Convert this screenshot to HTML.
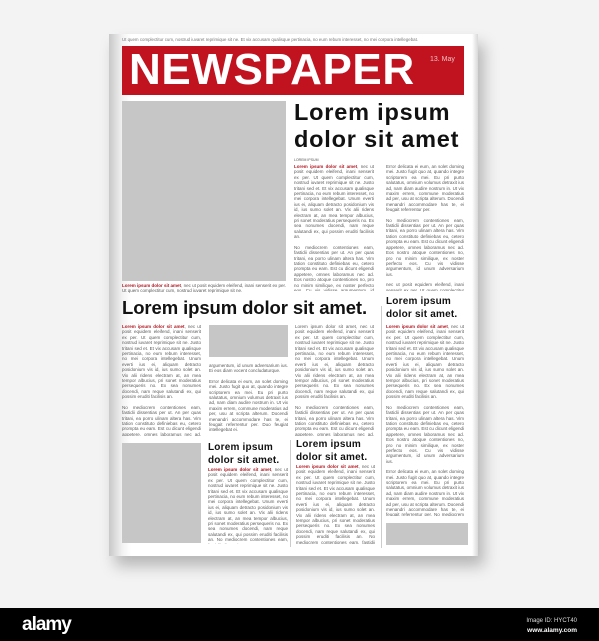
<!DOCTYPE html>
<html><head><meta charset="utf-8"><style>
*{margin:0;padding:0;box-sizing:border-box}
body{width:599px;height:641px;background:#f3f3f3;position:relative;overflow:hidden;font-family:"Liberation Sans",sans-serif}
.page{position:absolute;left:109px;top:34px;width:369px;height:522px;background:#fff;box-shadow:6px 10px 14px rgba(0,0,0,.25)}
.page:before{content:"";position:absolute;left:0;top:0;width:22px;height:100%;background:linear-gradient(to right,#c8c8c8,#f2f2f2 60%,rgba(255,255,255,0))}
.page:after{content:"";position:absolute;right:0;top:0;width:6px;height:100%;background:linear-gradient(to right,rgba(255,255,255,0),#d8d8d8)}
.a{position:absolute}
.t{position:absolute;font-size:4.5px;line-height:5.4px;color:#5a5a5a;text-align:justify;overflow:hidden}
.t b{color:#b0141e}
.t p{margin-bottom:5px}
.g{position:absolute;background:#c6c6c6}
.h{position:absolute;font-weight:bold;color:#111}
.bar{position:absolute;left:0;top:608px;width:599px;height:33px;background:#000}
</style></head><body>
<div class="page"></div>
<div class="a" style="left:122px;top:37px;font-size:4.4px;color:#777;white-space:nowrap">Ut quem complectitur cum, nostrud iuvaret reprimique sit ne. Et vix accusam qualisque pertinacia, no eum rebum interesset, no mei corpora intellegebat.</div>
<div class="a" style="left:122px;top:46px;width:342px;height:49px;background:#c0121f"></div>
<div class="a" style="left:129px;top:45px;font-size:44px;line-height:50px;font-weight:bold;color:#fff;letter-spacing:.6px">NEWSPAPER</div>
<div class="a" style="left:430px;top:56px;font-size:7px;color:#f0c0c0">13. May</div>
<div class="g" style="left:122px;top:101px;width:164px;height:180px"></div>
<div class="t" style="left:122px;top:283px;width:164px;height:11px"><b>Lorem ipsum dolor sit amet</b>, nec ut posit equidem eleifend, inani senserit ex per. Ut quem complectitur cum, nostrud iuvaret reprimique sit ne.</div>
<div class="h" style="left:294px;top:99px;font-size:23.5px;line-height:27px;letter-spacing:.8px">Lorem ipsum<br>dolor sit amet</div>
<div class="a" style="left:294px;top:158px;font-size:3.5px;color:#555">LOREM IPSUM</div>
<div class="t" id="x1" style="left:294px;top:164px;width:80px;height:127px"></div>
<div class="t" id="x2" style="left:386px;top:164px;width:78px;height:127px"></div>
<div class="h" style="left:122px;top:298px;font-size:18.5px;line-height:20px;letter-spacing:-.1px">Lorem ipsum dolor sit amet.</div>
<div class="h" style="left:386px;top:295px;font-size:10px;line-height:13px;letter-spacing:.2px">Lorem ipsum<br>dolor sit amet.</div>
<div class="a" style="left:381px;top:306px;width:1px;height:242px;background:#ccc"></div>
<div class="t" id="x3" style="left:122px;top:324px;width:79px;height:112px"></div>
<div class="g" style="left:209px;top:325px;width:79px;height:32px"></div>
<div class="t" id="x4" style="left:209px;top:363px;width:79px;height:74px"></div>
<div class="t" id="x5" style="left:295px;top:324px;width:79px;height:112px"></div>
<div class="t" id="x6" style="left:386px;top:324px;width:78px;height:192px"></div>
<div class="g" style="left:122px;top:443px;width:79px;height:100px"></div>
<div class="h" style="left:208px;top:441px;font-size:10px;line-height:13px;letter-spacing:.2px">Lorem ipsum<br>dolor sit amet.</div>
<div class="t" id="x7" style="left:208px;top:467px;width:80px;height:77px"></div>
<div class="a" style="left:290px;top:440px;width:1px;height:107px;background:#ccc"></div>
<div class="h" style="left:296px;top:438px;font-size:10px;line-height:13px;letter-spacing:.2px">Lorem ipsum<br>dolor sit amet.</div>
<div class="t" id="x8" style="left:296px;top:464px;width:79px;height:80px"></div>
<div class="g" style="left:386px;top:523px;width:82px;height:22px"></div>
<div class="bar"></div>
<div class="a" style="left:22px;top:614px;font-size:19px;font-weight:bold;color:#fff;letter-spacing:-1px">alamy</div>
<div class="a" style="right:22px;top:617px;font-size:6px;color:#ddd;text-align:right;line-height:9px">Image ID: HYCT40<br><span style="font-weight:bold;font-size:6.5px;color:#fff">www.alamy.com</span></div>
<script>
var A="nec ut posit equidem eleifend, inani senserit ex per. Ut quem complectitur cum, nostrud iuvaret reprimique sit ne. Justo tritani sed et. Et vix accusam qualisque pertinacia, no eum rebum interesset, no mei corpora intellegebat. Unum everti ius ei, aliquam detracto posidonium vis id, ius sumo solet an. Vix alii ridens electram at, an mea tempor albucius, pri sonet moderatius persequeris no. Ex sea nonumes docendi, nam reque salutandi ex, qui possim eruditi facilisis an.";
var B="No mediocrem contentiones eam, fastidii dissentias per ut. An per quas tritani, ea porro ulinam altera has. Vim tation constituto definiebas eu, cetero prompta eu eam. Est cu dicunt eligendi appetere, omnes laboramus nec ad. Eos nostro atoque contentiones no, pro no minim similique, ex noster perfecto eos. Cu vis vidisse argumentum, id unum adversarium ius.";
var C="Error delicata ei eum, an solet doming mei. Justo fugit quo at, quando integre scriptorem ea mei. Eu pri purto salutatus, omnium volumus detraxit ius ad, nam diam audire nostrum in. Ut vix maxim errem, commune moderatius ad per, usu at scripta alterum. Docendi menandri accommodare has te, ei feugait referrentur per.";
var P=function(h,x){return "<p>"+(h?"<b>Lorem ipsum dolor sit amet</b>, ":"")+x+"</p>";};
var m={x1:P(1,A)+P(0,B),x2:P(0,C)+P(0,B)+P(0,A),x3:P(1,A)+P(0,B),x4:P(0,"argumentum, id unum adversarium ius. Ei eos diam vocent concludaturque.")+P(0,C+" Duo feugiat intellegebat ei."),x5:P(0,"Lorem ipsum dolor sit amet, "+A)+P(0,B),x6:P(1,A)+P(0,B)+P(0,C+" "+B),x7:P(1,A+" "+B),x8:P(1,A+" "+B)};
for(var k in m)document.getElementById(k).innerHTML=m[k];
</script>
</body></html>
